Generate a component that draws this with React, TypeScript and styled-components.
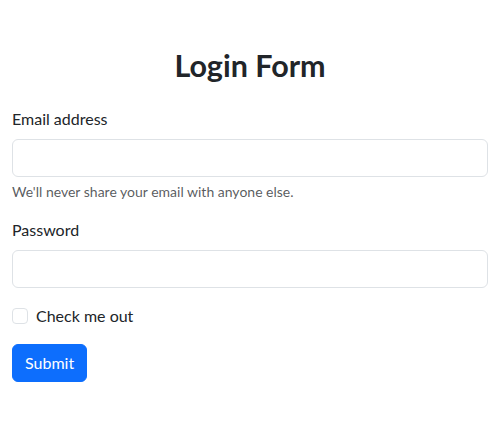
import styled, { createGlobalStyle } from 'styled-components';

const GlobalStyle = createGlobalStyle`
  *, *::before, *::after { box-sizing: border-box; }
  body {
    margin: 0;
    background: #fff;
    color: #212529;
    font-family: Lato, "Noto Sans", sans-serif;
    font-size: 16px;
    line-height: 1.5;
  }
`;

const Container = styled.div`
  padding: 48px 12px 0;
`;

const Title = styled.h1`
  margin: 0 0 24px;
  text-align: center;
  font-size: 30.5px;
  font-weight: 700;
  line-height: 1.16;
`;

const Field = styled.div`
  margin-bottom: 16px;
`;

const Label = styled.label`
  display: inline-block;
  margin-bottom: 8px;
`;

const Input = styled.input`
  display: block;
  width: 100%;
  height: 38px;
  padding: 6px 12px;
  font: inherit;
  color: #212529;
  background: #fff;
  border: 1px solid #dee2e6;
  border-radius: 6px;
  outline: none;
`;

const Hint = styled.div`
  margin-top: 4px;
  font-size: 14px;
  color: rgba(33, 37, 41, 0.75);
`;

const CheckRow = styled.div`
  display: flex;
  align-items: center;
  gap: 8px;
  min-height: 24px;
  margin-bottom: 16px;
`;

const Check = styled.input`
  appearance: none;
  width: 16px;
  height: 16px;
  margin: 0;
  border: 1px solid #dee2e6;
  border-radius: 4px;
  background: #fff;
`;

const Button = styled.button`
  padding: 6px 12px;
  font: inherit;
  line-height: 1.5;
  color: #fff;
  background: #0d6efd;
  border: 1px solid #0d6efd;
  border-radius: 6px;
  cursor: pointer;
`;

export default function App() {
  return (
    <>
      <GlobalStyle />
      <Container>
        <Title>Login Form</Title>
        <form onSubmit={(e) => e.preventDefault()}>
          <Field>
            <Label htmlFor="email">Email address</Label>
            <Input id="email" type="email" />
            <Hint>We'll never share your email with anyone else.</Hint>
          </Field>
          <Field>
            <Label htmlFor="password">Password</Label>
            <Input id="password" type="password" />
          </Field>
          <CheckRow>
            <Check id="check" type="checkbox" />
            <label htmlFor="check">Check me out</label>
          </CheckRow>
          <Button type="submit">Submit</Button>
        </form>
      </Container>
    </>
  );
}
